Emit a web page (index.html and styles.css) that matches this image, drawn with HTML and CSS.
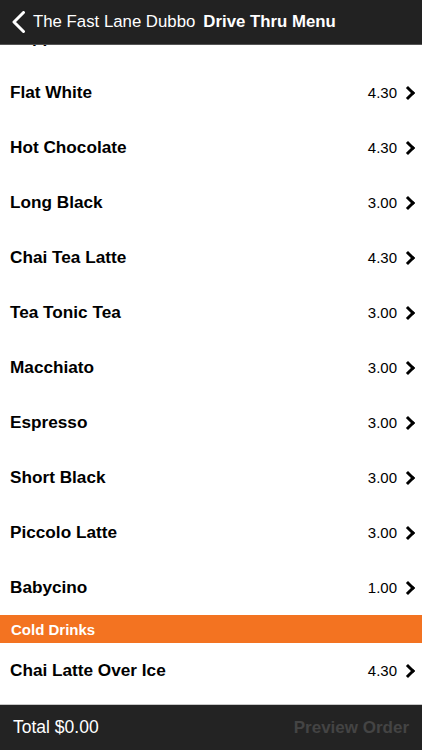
FILE: index.html
```html
<!DOCTYPE html>
<html lang="en">
<head>
    <meta charset="UTF-8">
    <meta name="viewport" content="width=device-width, initial-scale=1.0">
    <title>Drive Thru Menu</title>
    <link rel="stylesheet" href="styles.css">
</head>
<body>
    <div class="app">
        <header class="nav-bar">
            <a class="back" href="#">
                <svg class="back-icon" width="15" height="22" viewBox="0 0 15 22">
                    <path d="M12.5 1.5 L3 11 L12.5 20.5" fill="none" stroke="#fff" stroke-width="3" stroke-linecap="round" stroke-linejoin="round"/>
                </svg>
                <span class="back-label">The Fast Lane Dubbo</span>
            </a>
            <h1 class="nav-title">Drive Thru Menu</h1>
        </header>

        <main class="menu">
            <ul class="menu-list scrolled">
                <li class="item"><span class="item-name">Cappuccino</span><span class="item-price">4.30</span><span class="chev"></span></li>
                <li class="item"><span class="item-name">Flat White</span><span class="item-price">4.30</span><span class="chev"></span></li>
                <li class="item"><span class="item-name">Hot Chocolate</span><span class="item-price">4.30</span><span class="chev"></span></li>
                <li class="item"><span class="item-name">Long Black</span><span class="item-price">3.00</span><span class="chev"></span></li>
                <li class="item"><span class="item-name">Chai Tea Latte</span><span class="item-price">4.30</span><span class="chev"></span></li>
                <li class="item"><span class="item-name">Tea Tonic Tea</span><span class="item-price">3.00</span><span class="chev"></span></li>
                <li class="item"><span class="item-name">Macchiato</span><span class="item-price">3.00</span><span class="chev"></span></li>
                <li class="item"><span class="item-name">Espresso</span><span class="item-price">3.00</span><span class="chev"></span></li>
                <li class="item"><span class="item-name">Short Black</span><span class="item-price">3.00</span><span class="chev"></span></li>
                <li class="item"><span class="item-name">Piccolo Latte</span><span class="item-price">3.00</span><span class="chev"></span></li>
                <li class="item"><span class="item-name">Babycino</span><span class="item-price">1.00</span><span class="chev"></span></li>
                <li class="section">Cold Drinks</li>
                <li class="item"><span class="item-name">Chai Latte Over Ice</span><span class="item-price">4.30</span><span class="chev"></span></li>
            </ul>
        </main>

        <footer class="order-bar">
            <span class="total">Total $0.00</span>
            <button class="preview" type="button" disabled>Preview Order</button>
        </footer>
    </div>
</body>
</html>
```

FILE: styles.css
```css
* {
    box-sizing: border-box;
}

body {
    margin: 0;
    padding: 0;
    font-family: 'Liberation Sans', Arial, sans-serif;
    background-color: #fff;
    color: #000;
}

.app {
    display: flex;
    flex-direction: column;
    height: 750px;
    overflow: hidden;
}

.nav-bar {
    flex: 0 0 45px;
    display: flex;
    align-items: center;
    gap: 8px;
    padding: 0 0 1px 11px;
    background-color: #222;
    border-bottom: 1px solid #555;
    color: #fff;
}

.back {
    display: flex;
    align-items: center;
    gap: 7px;
    color: #fff;
    text-decoration: none;
}

.back-label {
    font-size: 16.8px;
}

.nav-title {
    margin: 0;
    font-size: 16.8px;
    font-weight: bold;
}

.menu {
    flex: 1;
    overflow: hidden;
}

.menu-list {
    list-style: none;
    margin: 0;
    padding: 0;
}

/* list is scrolled so Cappuccino sits under the nav bar */
.scrolled {
    margin-top: -35px;
}

.item {
    display: flex;
    align-items: center;
    height: 55px;
    padding: 0 8px 0 10px;
}

.item-name {
    flex: 1;
    font-size: 17.2px;
    font-weight: bold;
}

.item-price {
    font-size: 15px;
    margin-right: 6px;
}

.chev {
    width: 10px;
    height: 10px;
    border-top: 3px solid #000;
    border-right: 3px solid #000;
    transform: rotate(45deg);
    margin-right: 1px;
}

.section {
    height: 28px;
    display: flex;
    align-items: center;
    padding: 0 11px;
    background-color: #f37321;
    color: #fff;
    font-size: 15px;
    font-weight: bold;
}

.order-bar {
    flex: 0 0 46px;
    display: flex;
    align-items: center;
    justify-content: space-between;
    padding: 0 13px;
    background-color: #232323;
    border-top: 1px solid #c8c8c8;
}

.total {
    color: #fff;
    font-size: 17.5px;
}

.preview {
    background: none;
    border: none;
    padding: 0;
    font-family: inherit;
    font-size: 17px;
    font-weight: bold;
    color: #444;
}
```
